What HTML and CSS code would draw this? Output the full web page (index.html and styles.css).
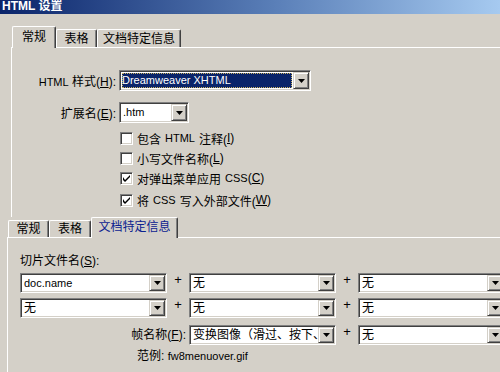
FILE: index.html
```html
<!DOCTYPE html>
<html lang="zh-CN">
<head>
    <meta charset="UTF-8">
    <title>HTML 设置</title>
    <link rel="stylesheet" href="styles.css">
</head>
<body>
    <div class="titlebar">HTML 设置</div>

    <div class="tabstrip tabstrip-top">
        <div class="tab sel" style="width:44px">常规</div>
        <div class="tab" style="width:41px">表格</div>
        <div class="tab" style="width:84px">文档特定信息</div>
    </div>
    <div class="panel panel-top">
        <div class="field">
            <label class="fl"><span class="l">HTML</span> 样式(<u>H</u>):</label>
            <div class="combo combo-style">
                <span class="val focus"><span class="l">Dreamweaver XHTML</span></span>
                <span class="btn"><svg width="7" height="4" viewBox="0 0 7 4"><path d="M0 0h7L3.5 4z" fill="#000"/></svg></span>
            </div>
        </div>
        <div class="field field-ext">
            <label class="fl">扩展名(<u>E</u>):</label>
            <div class="combo combo-ext">
                <span class="val"><span class="l">.htm</span></span>
                <span class="btn"><svg width="7" height="4" viewBox="0 0 7 4"><path d="M0 0h7L3.5 4z" fill="#000"/></svg></span>
            </div>
        </div>
        <div class="checks">
            <div class="check"><span class="cb"></span>包含<span class="l sp">HTML</span>注释(<u>I</u>)</div>
            <div class="check"><span class="cb"></span>小写文件名称(<u>L</u>)</div>
            <div class="check"><span class="cb"><svg width="7" height="7" viewBox="0 0 7 7"><path d="M0 2v3l2 2 5-5V0L2 5z" fill="#000"/></svg></span>对弹出菜单应用<span class="l sp-left">CSS</span>(<u>C</u>)</div>
            <div class="check last"><span class="cb"><svg width="7" height="7" viewBox="0 0 7 7"><path d="M0 2v3l2 2 5-5V0L2 5z" fill="#000"/></svg></span>将<span class="l sp">CSS</span>写入外部文件(<u>W</u>)</div>
        </div>
    </div>

    <div class="tabstrip tabstrip-bottom">
        <div class="tab" style="width:41px">常规</div>
        <div class="tab" style="width:42px">表格</div>
        <div class="tab sel hot" style="width:87px">文档特定信息</div>
    </div>
    <div class="panel panel-bottom">
        <div class="slice-label">切片文件名(<u>S</u>):</div>
        <div class="slice-grid">
            <div class="combo"><span class="val"><span class="l">doc.name</span></span><span class="btn"><svg width="7" height="4" viewBox="0 0 7 4"><path d="M0 0h7L3.5 4z" fill="#000"/></svg></span></div>
            <div class="plus">+</div>
            <div class="combo"><span class="val">无</span><span class="btn"><svg width="7" height="4" viewBox="0 0 7 4"><path d="M0 0h7L3.5 4z" fill="#000"/></svg></span></div>
            <div class="plus">+</div>
            <div class="combo"><span class="val">无</span><span class="btn"><svg width="7" height="4" viewBox="0 0 7 4"><path d="M0 0h7L3.5 4z" fill="#000"/></svg></span></div>

            <div class="combo"><span class="val">无</span><span class="btn"><svg width="7" height="4" viewBox="0 0 7 4"><path d="M0 0h7L3.5 4z" fill="#000"/></svg></span></div>
            <div class="plus">+</div>
            <div class="combo"><span class="val">无</span><span class="btn"><svg width="7" height="4" viewBox="0 0 7 4"><path d="M0 0h7L3.5 4z" fill="#000"/></svg></span></div>
            <div class="plus">+</div>
            <div class="combo"><span class="val">无</span><span class="btn"><svg width="7" height="4" viewBox="0 0 7 4"><path d="M0 0h7L3.5 4z" fill="#000"/></svg></span></div>

            <label class="frame-label">帧名称(<u>F</u>):</label>
            <div class="combo row3"><span class="val">变换图像（滑过、按下、</span><span class="btn"><svg width="7" height="4" viewBox="0 0 7 4"><path d="M0 0h7L3.5 4z" fill="#000"/></svg></span></div>
            <div class="plus row3">+</div>
            <div class="combo row3"><span class="val">无</span><span class="btn"><svg width="7" height="4" viewBox="0 0 7 4"><path d="M0 0h7L3.5 4z" fill="#000"/></svg></span></div>
        </div>
        <div class="example">范例: <span class="l">fw8menuover.gif</span></div>
    </div>
</body>
</html>
```

FILE: styles.css
```css
body { margin: 0; width: 500px; height: 372px; overflow: hidden; background: #d4d0c8; color: #000; font-family: "Liberation Sans", "Noto Sans CJK SC", sans-serif; font-size: 12px; }
u { text-decoration: underline; text-underline-offset: 1px; }
.l { font-size: 11px; }
.sp { margin: 0 4px; }
.sp-left { margin-left: 4px; }

.titlebar { height: 14px; line-height: 12px; padding-left: 2px; color: #fff; font-weight: bold; background: linear-gradient(to right, #0a246a, #5a7fb8 55%, #a6caf0); overflow: hidden; }

.tabstrip { display: flex; align-items: flex-end; }
.tabstrip-top { margin-top: 12px; height: 21px; padding-left: 12px; }
.tabstrip-bottom { height: 20px; margin-left: 7px; padding-left: 1px; }
.tab { box-sizing: border-box; height: 18px; padding-top: 1px; line-height: 16px; text-align: center; white-space: nowrap; background: #d4d0c8; border-top: 1px solid #fff; border-left: 1px solid #fff; border-right: 1px solid #404040; box-shadow: inset -1px 0 #808080; border-radius: 2px 2px 0 0; }
.tabstrip-bottom .tab { height: 17px; padding-top: 0; }
.tab.sel { position: relative; z-index: 1; height: 22px; margin-bottom: -1px; padding-top: 2px; }
.tabstrip-bottom .tab.sel { height: 21px; padding-top: 1px; }
.tab.hot { color: #0c2290; }

.panel { box-sizing: border-box; border-top: 1px solid #fff; border-left: 1px solid #fff; }
.panel-top { margin-left: 11px; height: 170px; padding-top: 22px; overflow: hidden; }
.panel-bottom { margin-left: 7px; height: 135px; padding: 15px 0 0 12px; }

.field { display: flex; align-items: center; }
.field-ext { margin-top: 11px; }
.fl { width: 104px; margin-right: 3px; text-align: right; white-space: nowrap; }

.combo { box-sizing: border-box; display: flex; height: 20px; padding: 1px; background: #fff; border: 1px solid; border-color: #808080 #fff #fff #808080; box-shadow: inset 1px 1px #404040, inset -1px -1px #d4d0c8; }
.combo-style { width: 192px; height: 21px; }
.combo-ext { width: 70px; height: 21px; }
.combo .val { flex: 1; min-width: 0; padding-left: 2px; line-height: 16px; white-space: nowrap; overflow: hidden; }
.combo .val.focus { margin: 1px; padding-left: 0; line-height: 15px; color: #fff; background: #0a246a; outline: 1px dotted #c8b060; outline-offset: -1px; }
.combo .btn { box-sizing: border-box; width: 16px; flex-shrink: 0; display: flex; align-items: center; justify-content: center; background: #d4d0c8; border: 1px solid; border-color: #d4d0c8 #404040 #404040 #d4d0c8; box-shadow: inset 1px 1px #fff, inset -1px -1px #808080; }

.checks { margin-top: 5px; padding-left: 108px; }
.check { display: flex; align-items: center; height: 20px; white-space: nowrap; }
.check.last { margin-top: 2px; }
.cb { box-sizing: border-box; width: 13px; height: 13px; margin-right: 4px; display: flex; align-items: center; justify-content: center; background: #fff; border: 1px solid; border-color: #808080 #fff #fff #808080; box-shadow: inset 1px 1px #404040, inset -1px -1px #d4d0c8; }

.slice-label { line-height: 16px; }
.slice-grid { display: grid; grid-template-columns: 147px 22px 147px 22px 147px; grid-auto-rows: 20px; row-gap: 5px; margin-top: 4px; }
.plus { text-align: center; font-size: 13px; line-height: 13px; }
.row3 { margin-top: 2px; }
.frame-label { grid-column: 1 / 3; margin-top: 2px; padding-right: 3px; text-align: right; line-height: 20px; }
.example { margin: 5px 0 0 117px; line-height: 16px; }
```
